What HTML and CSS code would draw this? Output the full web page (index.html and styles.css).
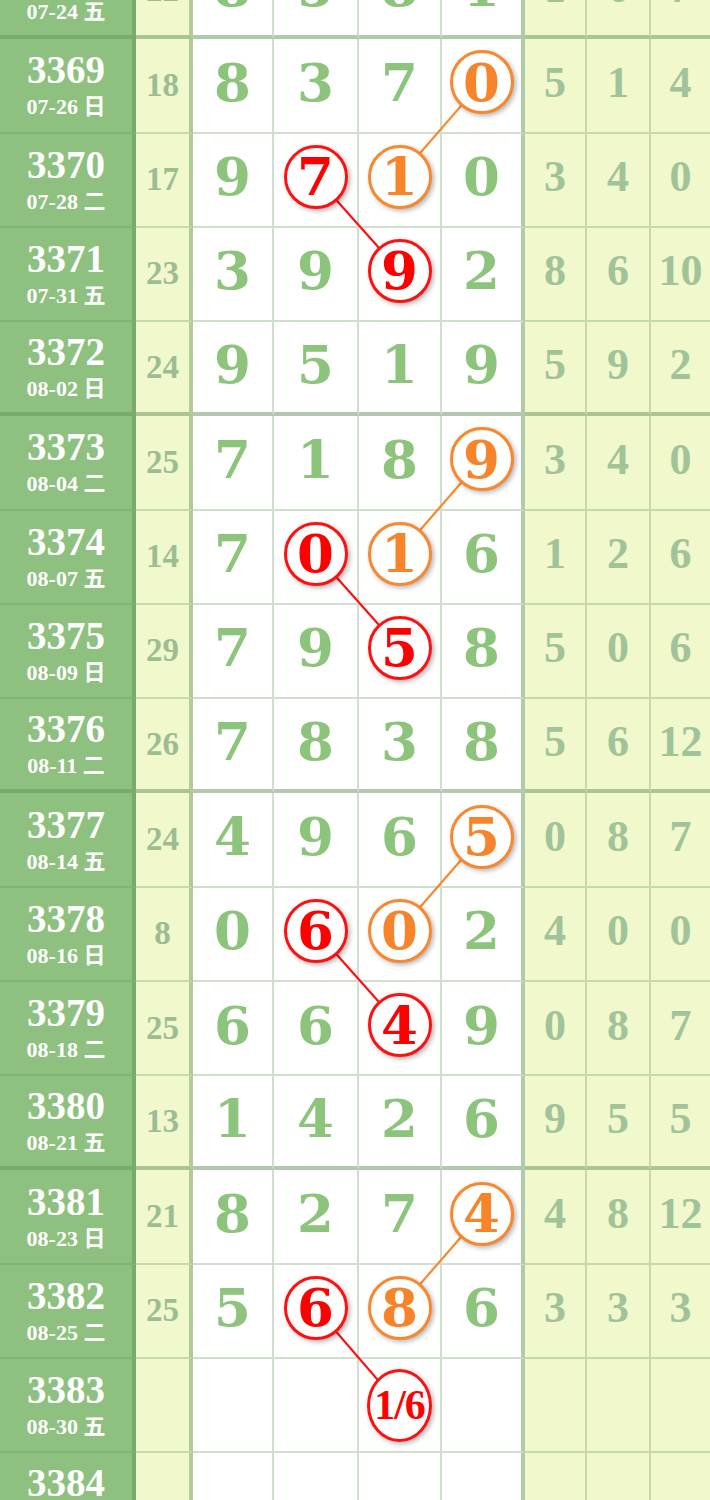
FILE: index.html
```html
<!DOCTYPE html>
<html lang="zh">
  <head>
    <meta charset="UTF-8" />
    <meta name="viewport" content="width=device-width, initial-scale=1.0" />
    <title>走势图</title>
    <link rel="stylesheet" href="styles.css">
  </head>
  <body>
    <div class="chart" id="chart">
      <svg class="links" id="links" xmlns="http://www.w3.org/2000/svg"></svg>
    </div>

    <script>
      // issue, date, sum, main digits, side digits, marks (r = red ball, o = orange ball)
      const rows = [
        ["3368", "07-24 五", 22, [8, 5, 8, 1], [1, 6, 7], {}],
        ["3369", "07-26 日", 18, [8, 3, 7, 0], [5, 1, 4], { o: 3 }],
        ["3370", "07-28 二", 17, [9, 7, 1, 0], [3, 4, 0], { r: 1, o: 2 }],
        ["3371", "07-31 五", 23, [3, 9, 9, 2], [8, 6, 10], { r: 2 }],
        ["3372", "08-02 日", 24, [9, 5, 1, 9], [5, 9, 2], {}],
        ["3373", "08-04 二", 25, [7, 1, 8, 9], [3, 4, 0], { o: 3 }],
        ["3374", "08-07 五", 14, [7, 0, 1, 6], [1, 2, 6], { r: 1, o: 2 }],
        ["3375", "08-09 日", 29, [7, 9, 5, 8], [5, 0, 6], { r: 2 }],
        ["3376", "08-11 二", 26, [7, 8, 3, 8], [5, 6, 12], {}],
        ["3377", "08-14 五", 24, [4, 9, 6, 5], [0, 8, 7], { o: 3 }],
        ["3378", "08-16 日", 8, [0, 6, 0, 2], [4, 0, 0], { r: 1, o: 2 }],
        ["3379", "08-18 二", 25, [6, 6, 4, 9], [0, 8, 7], { r: 2 }],
        ["3380", "08-21 五", 13, [1, 4, 2, 6], [9, 5, 5], {}],
        ["3381", "08-23 日", 21, [8, 2, 7, 4], [4, 8, 12], { o: 3 }],
        ["3382", "08-25 二", 25, [5, 6, 8, 6], [3, 3, 3], { r: 1, o: 2 }],
        ["3383", "08-30 五", "", ["", "", "1/6", ""], ["", "", ""], { r: 2 }],
        ["3384", "09-01 二", "", ["", "", "", ""], ["", "", ""], {}],
      ];

      const chart = document.getElementById("chart");

      function cell(cls, text) {
        let div = document.createElement("div");
        div.className = "cell " + cls;
        if (text !== undefined) div.textContent = text;
        return div;
      }

      function buildRows() {
        rows.forEach((r, i) => {
          let [issue, date, sum, nums, side, marks] = r;
          let row = document.createElement("div");
          row.className = "row";
          if ((parseInt(issue) - 3368) % 4 === 0) row.classList.add("group-end");

          let first = cell("issue");
          first.innerHTML = `<span class="no">${issue}</span><span class="date">${date}</span>`;
          row.appendChild(first);
          row.appendChild(cell("sum", sum));

          nums.forEach((n, k) => {
            let c = cell("num");
            let color = marks.r === k ? "red" : marks.o === k ? "orange" : "";
            if (color) {
              let ball = document.createElement("span");
              ball.className = "ball " + color;
              if (String(n).length > 1) ball.classList.add("guess");
              ball.dataset.row = i;
              ball.textContent = n;
              c.appendChild(ball);
            } else {
              c.textContent = n;
            }
            row.appendChild(c);
          });

          side.forEach((n) => row.appendChild(cell("side", n)));
          chart.appendChild(row);
        });
      }

      function drawLinks() {
        let svg = document.getElementById("links");
        let box = chart.getBoundingClientRect();
        svg.setAttribute("width", box.width);
        svg.setAttribute("height", box.height);
        svg.innerHTML = "";

        ["red", "orange"].forEach((color) => {
          let balls = chart.querySelectorAll(".ball." + color);
          for (let i = 1; i < balls.length; i++) {
            let a = balls[i - 1];
            let b = balls[i];
            if (b.dataset.row - a.dataset.row !== 1) continue;
            let ra = a.getBoundingClientRect();
            let rb = b.getBoundingClientRect();
            let line = document.createElementNS("http://www.w3.org/2000/svg", "line");
            line.setAttribute("x1", ra.left + ra.width / 2 - box.left);
            line.setAttribute("y1", ra.top + ra.height / 2 - box.top);
            line.setAttribute("x2", rb.left + rb.width / 2 - box.left);
            line.setAttribute("y2", rb.top + rb.height / 2 - box.top);
            line.setAttribute("class", "link " + color);
            svg.appendChild(line);
          }
        });
      }

      buildRows();
      drawLinks();
    </script>
  </body>
</html>
```

FILE: styles.css
```css
body {
  margin: 0;
  background-color: #ffffff;
  overflow: hidden;
}
.chart {
  position: relative;
  width: 710px;
  margin-top: -55px;
}
.links {
  position: absolute;
  top: 0;
  left: 0;
  z-index: 1;
  pointer-events: none;
}
.link {
  stroke-width: 2.2;
}
.link.red {
  stroke: #ff1010;
}
.link.orange {
  stroke: #f7882e;
}
.row {
  display: grid;
  grid-template-columns: 136px 57px 81px 85px 83px 83px 62px 64px 59px;
  height: 94.27px;
}
.cell {
  box-sizing: border-box;
  display: flex;
  align-items: center;
  justify-content: center;
  border-right: 2px solid rgba(100, 150, 90, 0.3);
  border-bottom: 2px solid rgba(100, 150, 90, 0.3);
  font-family: "DejaVu Serif", serif;
  font-weight: bold;
  line-height: 1;
}
.row.group-end .cell {
  border-bottom: 4px solid rgba(100, 150, 90, 0.5);
}
.issue {
  flex-direction: column;
  padding-top: 4px;
  background-color: #8ec080;
  color: #ffffff;
  border-right: 4px solid rgba(100, 150, 90, 0.5);
  font-family: "Liberation Serif", "Noto Sans CJK SC", serif;
}
.issue .no {
  font-size: 39px;
  line-height: 40px;
}
.issue .date {
  font-size: 22px;
  line-height: 34px;
}
.sum {
  background-color: #f0f8cc;
  color: #9cbd94;
  border-right: 4px solid rgba(100, 150, 90, 0.45);
  font-family: "Liberation Serif", serif;
  font-size: 33px;
}
.num {
  padding-bottom: 6px;
  color: #8cc47c;
  font-size: 53px;
}
.num:nth-child(6) {
  border-right: 4px solid rgba(100, 150, 90, 0.5);
}
.side {
  padding-bottom: 5px;
  background-color: #f0f8cc;
  color: #a0c39a;
  font-family: "Liberation Serif", serif;
  font-size: 44px;
}
.side:last-child {
  border-right: none;
}
.ball {
  position: relative;
  z-index: 2;
  box-sizing: border-box;
  display: flex;
  align-items: center;
  justify-content: center;
  width: 64px;
  height: 64px;
  border-radius: 50%;
  border: 3px solid;
  background-color: #ffffff;
  box-shadow: 2px 2px 5px rgba(0, 0, 0, 0.3);
}
.ball.red {
  color: #ff0000;
  border-color: #ff1010;
}
.ball.orange {
  color: #f7842a;
  border-color: #f7882e;
}
.ball.guess {
  width: 65px;
  height: 73px;
  margin-top: 6px;
  font-family: "Liberation Serif", serif;
  font-size: 42px;
  letter-spacing: -1px;
}
```
